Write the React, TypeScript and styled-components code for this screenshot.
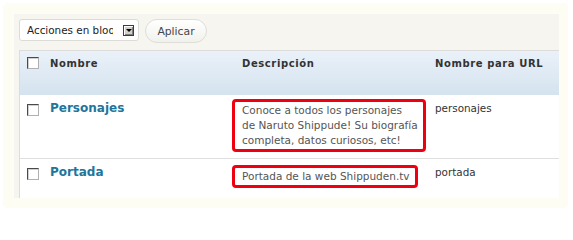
import React from "react";
import styled, { createGlobalStyle } from "styled-components";

const Global = createGlobalStyle`
  html, body { margin: 0; padding: 0; background: #ffffff; }
  body { font-family: "DejaVu Sans", Verdana, sans-serif; }
  * { box-sizing: border-box; }
`;

const Outer = styled.div`
  margin: 3px;
  width: 565px;
  height: 205px;
  background: #fdfdf3;
  border-radius: 5px;
  padding: 11px 9px 10px 11px;
`;

const Panel = styled.div`
  height: 100%;
  background: #f6f5f0;
  padding: 5px 0 0 5px;
  display: flex;
  flex-direction: column;
  overflow: hidden;
`;

const Toolbar = styled.div`
  display: flex;
  align-items: flex-start;
  gap: 6px;
  height: 24px;
  margin-bottom: 7px;
  flex: none;
`;

const SelectBox = styled.div`
  width: 120px;
  height: 22px;
  background: #ffffff;
  border: 1px solid #dcdcd6;
  border-radius: 3px;
  display: flex;
  align-items: center;
  padding: 0 4px 0 7px;
  font-size: 10.4px;
  color: #222;
`;

const SelectText = styled.span`
  width: 86.5px;
  margin-right: 10px;
  overflow: hidden;
  white-space: nowrap;
`;

const ArrowBox = styled.span`
  width: 11px;
  height: 11px;
  flex: none;
  background: #d4d0c8;
  border: 1px solid #3c3c3c;
  box-shadow: inset 1px 1px 0 #ffffff, inset -1px -1px 0 #808080;
  display: flex;
  align-items: center;
  justify-content: center;
  &::after {
    content: "";
    display: block;
    width: 0;
    height: 0;
    border-left: 3px solid transparent;
    border-right: 3px solid transparent;
    border-top: 3px solid #000;
  }
`;

const Button = styled.div`
  width: 62px;
  height: 24px;
  border: 1px solid #deded8;
  border-radius: 12px;
  background: linear-gradient(#ffffff, #f1f1ec);
  display: flex;
  align-items: center;
  justify-content: center;
  font-size: 10.8px;
  color: #464646;
`;

const Table = styled.div`
  flex: 1;
  background: #ffffff;
  border-top: 1px solid #dcdcdc;
  border-left: 1px solid #dcdcdc;
`;

const Row = styled.div<{ $head?: boolean; $last?: boolean }>`
  display: grid;
  grid-template-columns: 23px 192px 193px 1fr;
  align-items: start;
  ${(p) =>
    p.$head
      ? `height: 44px; background: linear-gradient(#eaf1f9, #d4e3ef);`
      : p.$last
      ? ``
      : `border-bottom: 1px solid #dfdfdf;`}
`;

const Cell = styled.div<{ $pt?: number }>`
  padding: ${(p) => p.$pt ?? 6}px 7px 6px 7px;
`;

const CheckCell = styled.div<{ $pt: number }>`
  padding: ${(p) => p.$pt}px 0 0 7px;
`;

const Check = styled.span`
  display: block;
  width: 12px;
  height: 12px;
  background: #fff;
  border: 1px solid;
  border-color: #4a4a4a #b0b0b0 #b0b0b0 #4a4a4a;
  box-shadow: inset 1px 1px 0 #d0d0d0;
`;

const HeadText = styled.div`
  font-size: 10px;
  font-weight: bold;
  letter-spacing: 0.6px;
  color: #333;
  line-height: 12px;
  white-space: nowrap;
`;

const NameLink = styled.div`
  font-size: 12px;
  font-weight: bold;
  color: #21759b;
  line-height: 15px;
`;

const HiddenActions = styled.div`
  height: 12px;
  visibility: hidden;
  font-size: 9px;
  line-height: 12px;
`;

const Highlight = styled.div`
  display: inline-block;
  white-space: nowrap;
  margin: -2px 0 0 -10px;
  padding: 1px 5px 1px 7px;
  border: 3px solid #ee0010;
  border-radius: 4px;
  font-size: 10.5px;
  line-height: 15px;
  color: #555;
`;

const Plain = styled.div`
  font-size: 10.4px;
  line-height: 15px;
  color: #333;
`;

const rows = [
  {
    name: "Personajes",
    desc: ["Conoce a todos los personajes", "de Naruto Shippude! Su biografía", "completa, datos curiosos, etc!"],
    slug: "personajes",
  },
  {
    name: "Portada",
    desc: ["Portada de la web Shippuden.tv"],
    slug: "portada",
  },
];

export default function App() {
  return (
    <>
      <Global />
      <Outer>
        <Panel>
          <Toolbar>
            <SelectBox>
              <SelectText>Acciones en bloque</SelectText>
              <ArrowBox />
            </SelectBox>
            <Button>Aplicar</Button>
          </Toolbar>
          <Table>
            <Row $head>
              <CheckCell $pt={6}>
                <Check />
              </CheckCell>
              <Cell $pt={7}>
                <HeadText>Nombre</HeadText>
              </Cell>
              <Cell $pt={7}>
                <HeadText>Descripción</HeadText>
              </Cell>
              <Cell $pt={7}>
                <HeadText>Nombre para URL</HeadText>
              </Cell>
            </Row>
            {rows.map((r, i) => (
              <Row key={r.slug} $last={i === rows.length - 1}>
                <CheckCell $pt={9}>
                  <Check />
                </CheckCell>
                <Cell>
                  <NameLink>{r.name}</NameLink>
                  <HiddenActions>Editar</HiddenActions>
                </Cell>
                <Cell>
                  <Highlight>
                    {r.desc.map((l, j) => (
                      <React.Fragment key={j}>
                        {l}
                        {j < r.desc.length - 1 && <br />}
                      </React.Fragment>
                    ))}
                  </Highlight>
                </Cell>
                <Cell>
                  <Plain>{r.slug}</Plain>
                </Cell>
              </Row>
            ))}
          </Table>
        </Panel>
      </Outer>
    </>
  );
}
